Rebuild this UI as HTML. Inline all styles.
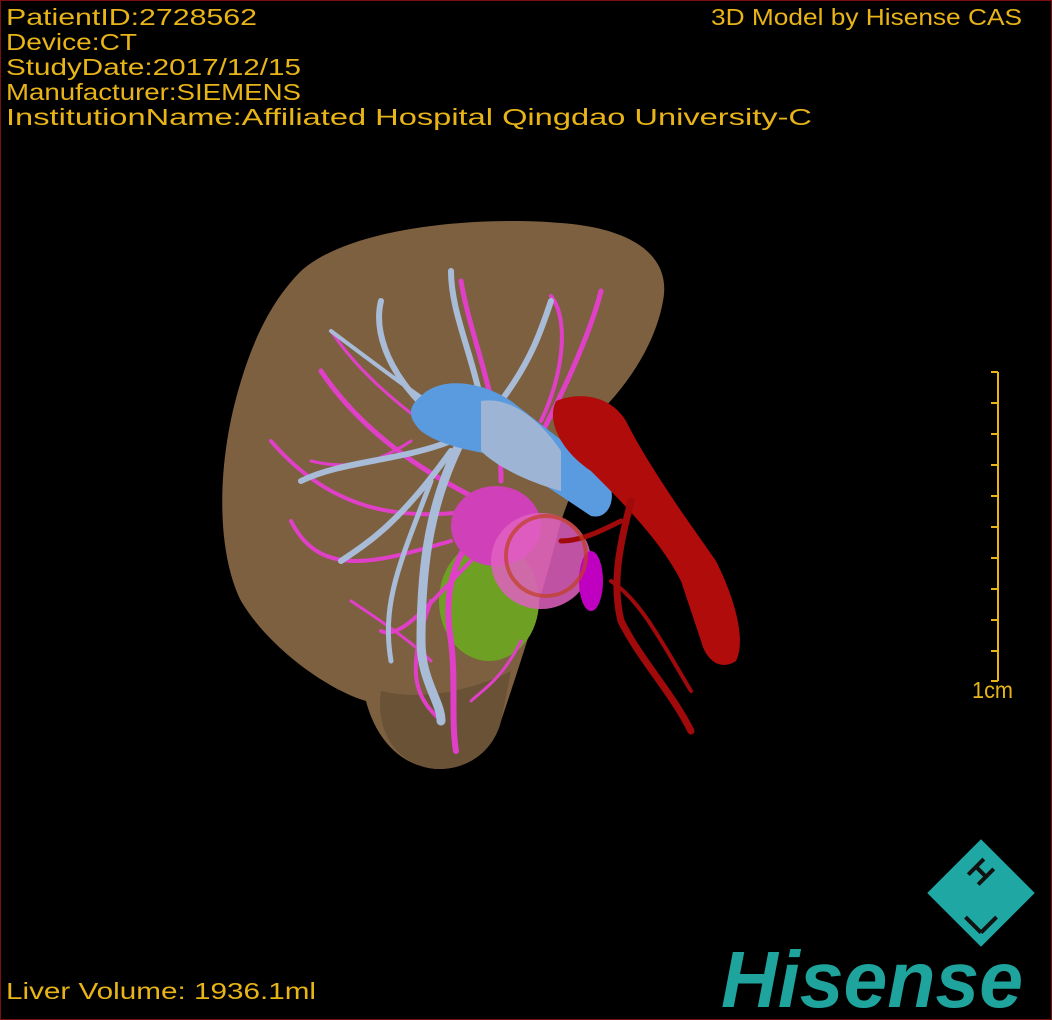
<!DOCTYPE html>
<html><head><style>
html,body{margin:0;padding:0;background:#000;}
.wrap{position:relative;width:1050px;height:1018px;border:1px solid #7a1010;overflow:hidden;background:#000;}
</style></head><body><div class="wrap">
<svg width="1050" height="1018" style="position:absolute;left:0;top:0">
<g fill="#e8b418" font-family="Liberation Sans,sans-serif" font-size="23">
<text x="5" y="24" textLength="251" lengthAdjust="spacingAndGlyphs">PatientID:2728562</text>
<text x="5" y="49" textLength="131" lengthAdjust="spacingAndGlyphs">Device:CT</text>
<text x="5" y="74" textLength="295" lengthAdjust="spacingAndGlyphs">StudyDate:2017/12/15</text>
<text x="5" y="99" textLength="295" lengthAdjust="spacingAndGlyphs">Manufacturer:SIEMENS</text>
<text x="5" y="124" textLength="806" lengthAdjust="spacingAndGlyphs">InstitutionName:Affiliated Hospital Qingdao University-C</text>
<text x="710" y="24" textLength="311" lengthAdjust="spacingAndGlyphs">3D Model by Hisense CAS</text>
<text x="5" y="998" textLength="310" lengthAdjust="spacingAndGlyphs">Liver Volume: 1936.1ml</text>
<text x="971" y="697" textLength="41" lengthAdjust="spacingAndGlyphs">1cm</text>
</g>
<g stroke="#e8b418" stroke-width="2">
<line x1="997" y1="371" x2="997" y2="680"/>
<line x1="990" y1="371" x2="997" y2="371"/><line x1="990" y1="402" x2="997" y2="402"/>
<line x1="990" y1="433" x2="997" y2="433"/><line x1="990" y1="464" x2="997" y2="464"/>
<line x1="990" y1="495" x2="997" y2="495"/><line x1="990" y1="526" x2="997" y2="526"/>
<line x1="990" y1="557" x2="997" y2="557"/><line x1="990" y1="588" x2="997" y2="588"/>
<line x1="990" y1="619" x2="997" y2="619"/><line x1="990" y1="650" x2="997" y2="650"/>
<line x1="990" y1="680" x2="997" y2="680"/>
</g>
<path d="M300 270 C350 225 480 215 560 222 C640 228 670 260 662 300 C655 340 630 380 600 410 L560 520 C540 600 520 660 500 720 C490 760 450 775 420 765 C385 755 370 720 365 700 C330 690 270 650 240 600 C215 550 215 460 240 380 C255 330 275 295 300 270 Z" fill="#7d6040"/>
<path d="M380 690 C420 700 470 690 510 670 L500 720 C490 760 450 775 420 765 C390 755 375 725 380 690Z" fill="#6a5236"/>
<ellipse cx="488" cy="600" rx="50" ry="60" fill="#6ea024"/>
<g stroke="#e040c8" fill="none" stroke-linecap="round">
<path d="M490 520 C460 540 440 580 450 640 C455 680 450 720 455 750" stroke-width="6"/>
<path d="M480 500 C420 470 360 430 320 370" stroke-width="5"/>
<path d="M470 510 C400 520 330 510 270 440" stroke-width="4"/>
<path d="M450 540 C380 560 320 580 290 520" stroke-width="4"/>
<path d="M470 560 C430 600 400 640 380 630" stroke-width="4"/>
<path d="M500 480 C500 400 470 340 460 280" stroke-width="5"/>
<path d="M520 470 C560 400 590 330 600 290" stroke-width="5"/>
<path d="M540 420 C560 380 570 320 550 295" stroke-width="4"/>
<path d="M430 600 C400 680 420 700 440 720" stroke-width="4"/>
<path d="M520 640 C500 680 480 690 470 700" stroke-width="3"/>
<path d="M330 330 C350 360 380 390 420 420" stroke-width="3"/>
<path d="M310 460 C350 470 380 460 410 440" stroke-width="3"/>
<path d="M350 600 C380 620 410 640 430 660" stroke-width="3"/>
</g>
<ellipse cx="495" cy="525" rx="45" ry="40" fill="#d040b8"/>
<ellipse cx="540" cy="560" rx="50" ry="48" fill="#e060c0" opacity="0.85"/>
<ellipse cx="590" cy="580" rx="12" ry="30" fill="#c000c0"/>
<g stroke="#a8bcd8" fill="none" stroke-linecap="round">
<path d="M460 440 C430 500 420 560 420 640 C420 680 440 700 440 720" stroke-width="9"/>
<path d="M450 440 C400 460 340 460 300 480" stroke-width="6"/>
<path d="M440 420 C400 390 370 340 380 300" stroke-width="6"/>
<path d="M450 450 C400 520 370 540 340 560" stroke-width="6"/>
<path d="M480 400 C470 350 450 310 450 270" stroke-width="6"/>
<path d="M500 400 C530 360 540 330 550 300" stroke-width="6"/>
<path d="M430 480 C400 560 380 600 390 660" stroke-width="5"/>
<path d="M330 330 C370 360 410 390 440 410" stroke-width="4"/>
</g>
<path d="M420 395 C440 375 480 380 510 400 L600 470 C620 490 610 520 590 515 L560 495 L500 455 C470 450 440 445 420 430 C405 415 408 405 420 395Z" fill="#5a9be0"/>
<path d="M480 400 C510 395 540 420 560 450 L560 490 C540 485 500 470 480 450Z" fill="#9db4d4"/>
<path d="M555 400 C580 390 610 395 625 420 C640 450 660 480 680 510 L715 560 C735 600 745 640 735 660 C720 670 705 660 700 640 L680 580 C660 540 620 500 590 470 C560 450 545 420 555 400Z" fill="#b00c0c"/>
<g stroke="#a00a0a" fill="none" stroke-linecap="round">
<path d="M630 500 C620 540 610 580 620 620 C640 660 670 690 690 730" stroke-width="7"/>
<path d="M610 580 C640 600 660 640 690 690" stroke-width="4"/>
<path d="M620 520 C600 530 580 540 560 540" stroke-width="5"/>
</g>
<circle cx="545" cy="555" r="40" fill="none" stroke="#c04020" stroke-width="4" opacity="0.7"/>
<g transform="translate(980,892) rotate(45)">
<rect x="-38" y="-38" width="76" height="76" fill="#1fa7a4"/>
<g stroke="#111" stroke-width="4" fill="none">
<path d="M-26 -22 L-4 -22 M-26 -8 L-4 -8 M-15 -22 L-15 -8" transform="rotate(90 -15 -15)"/>
<path d="M6 6 L6 28 M6 28 L28 28" transform="rotate(-90 17 17)"/>
</g>
</g>
<text x="720" y="1006" font-family="Liberation Sans,sans-serif" font-weight="bold" font-style="italic" font-size="80" fill="#1fa39d" textLength="302" lengthAdjust="spacingAndGlyphs">Hisense</text>
</svg>
</div></body></html>
